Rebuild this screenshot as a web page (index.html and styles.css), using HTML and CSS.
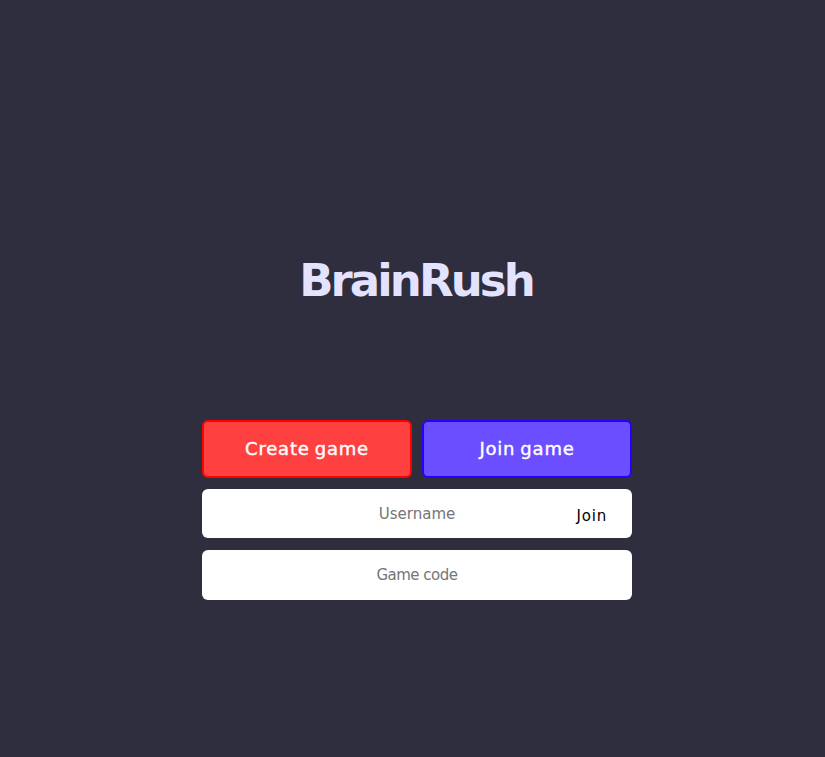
FILE: index.html
```html
<!DOCTYPE html>
<html lang="en">
<head>
<meta charset="utf-8">
<title>BrainRush</title>
<link rel="stylesheet" href="styles.css">
</head>
<body>
<main class="lobby">
  <h1 class="title">BrainRush</h1>
  <div class="actions">
    <button class="action create" type="button">Create game</button>
    <button class="action join" type="button">Join game</button>
  </div>
  <form class="fields">
    <div class="field username">
      <input type="text" placeholder="Username" aria-label="Username">
      <button class="submit" type="button">Join</button>
    </div>
    <div class="field code">
      <input type="text" placeholder="Game code" aria-label="Game code">
    </div>
  </form>
</main>
</body>
</html>
```
FILE: styles.css
```css
* {
  box-sizing: border-box;
}

body {
  margin: 0;
  height: 100vh;
  overflow: hidden;
  background: #2f2e3e;
  font-family: "DejaVu Sans", sans-serif;
}

.lobby {
  width: 430px;
  margin-left: 202px;
  padding-top: 251px;
}

.title {
  margin: 0 0 109px;
  padding-right: 2px;
  height: 60px;
  color: #e4e3ff;
  font-size: 45px;
  font-weight: 700;
  line-height: 60px;
  letter-spacing: -2.9px;
  text-align: center;
  white-space: nowrap;
}

.actions {
  display: grid;
  grid-template-columns: 1fr 1fr;
  gap: 10px;
  height: 58px;
}

.action {
  padding: 0 0 2px;
  border: 2px solid;
  border-radius: 6px;
  color: #fff;
  font: 500 18px "DejaVu Sans", sans-serif;
  letter-spacing: 0.8px;
  word-spacing: -1.5px;
  -webkit-text-stroke: 0.4px #fff;
}

.create {
  background: #ff4040;
  border-color: #ff0000;
}

.join {
  background: #6b4eff;
  border-color: #2600ff;
}

.fields {
  display: grid;
  gap: 12px;
  margin-top: 11px;
}

.field {
  position: relative;
  height: 50px;
}

.username {
  height: 49px;
}

.field input {
  display: block;
  width: 100%;
  height: 100%;
  padding: 0;
  border: 0;
  border-radius: 6px;
  background: #fff;
  color: #000;
  font: 15px "DejaVu Sans", sans-serif;
  text-align: center;
}

.field input::placeholder {
  color: #757575;
}

.code input {
  letter-spacing: -0.5px;
}

.submit {
  position: absolute;
  top: 17px;
  right: 25px;
  padding: 0;
  border: 0;
  background: none;
  color: #000;
  font: 15px/20px "DejaVu Sans", sans-serif;
  letter-spacing: 0.8px;
}
```
